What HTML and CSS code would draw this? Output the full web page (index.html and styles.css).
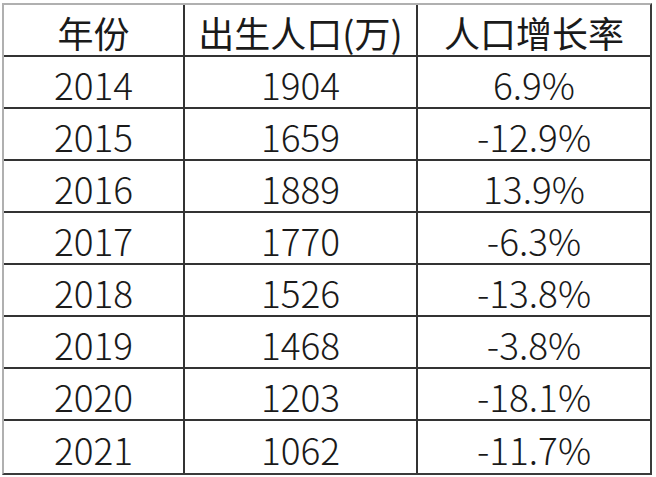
FILE: index.html
```html
<!DOCTYPE html>
<html lang="zh">
<head>
<meta charset="utf-8">
<title>出生人口</title>
<link rel="stylesheet" href="styles.css">
</head>
<body>
<div class="sheet">
  <div class="cell head">年份</div><div class="cell head">出生人口(万)</div><div class="cell head">人口增长率</div>
  <div class="cell">2014</div><div class="cell">1904</div><div class="cell">6.9%</div>
  <div class="cell">2015</div><div class="cell">1659</div><div class="cell">-12.9%</div>
  <div class="cell">2016</div><div class="cell">1889</div><div class="cell">13.9%</div>
  <div class="cell">2017</div><div class="cell">1770</div><div class="cell">-6.3%</div>
  <div class="cell">2018</div><div class="cell">1526</div><div class="cell">-13.8%</div>
  <div class="cell">2019</div><div class="cell">1468</div><div class="cell">-3.8%</div>
  <div class="cell">2020</div><div class="cell">1203</div><div class="cell">-18.1%</div>
  <div class="cell last">2021</div><div class="cell last">1062</div><div class="cell last">-11.7%</div>
</div>
</body>
</html>
```
FILE: styles.css
```css
html, body {
  margin: 0;
  padding: 0;
  background: #ffffff;
}
body {
  width: 656px;
  height: 477px;
  overflow: hidden;
}
.sheet {
  margin: 3px 0 0 2px;
  width: 646px;
  height: 468px;
  border-top: 2px solid #b0b0b0;
  border-left: 2px solid #b0b0b0;
  border-right: 2px solid #3a3a3a;
  border-bottom: 2px solid #3a3a3a;
  display: grid;
  grid-template-columns: 181px 233px 1fr;
  grid-template-rows: repeat(9, 1fr);
  font-family: "Noto Sans CJK SC", "Liberation Sans", sans-serif;
  font-weight: 300;
  font-size: 37px;
  color: #1a1a1a;
}
.cell {
  display: flex;
  align-items: center;
  justify-content: center;
  padding-top: 4px;
  border-bottom: 2px solid #333;
  border-right: 2px solid #333;
  line-height: 1;
}
.cell.head {
  font-size: 36px;
  font-weight: 400;
}
.cell:nth-child(3n) {
  border-right: none;
}
.cell.last {
  border-bottom: none;
}
```
